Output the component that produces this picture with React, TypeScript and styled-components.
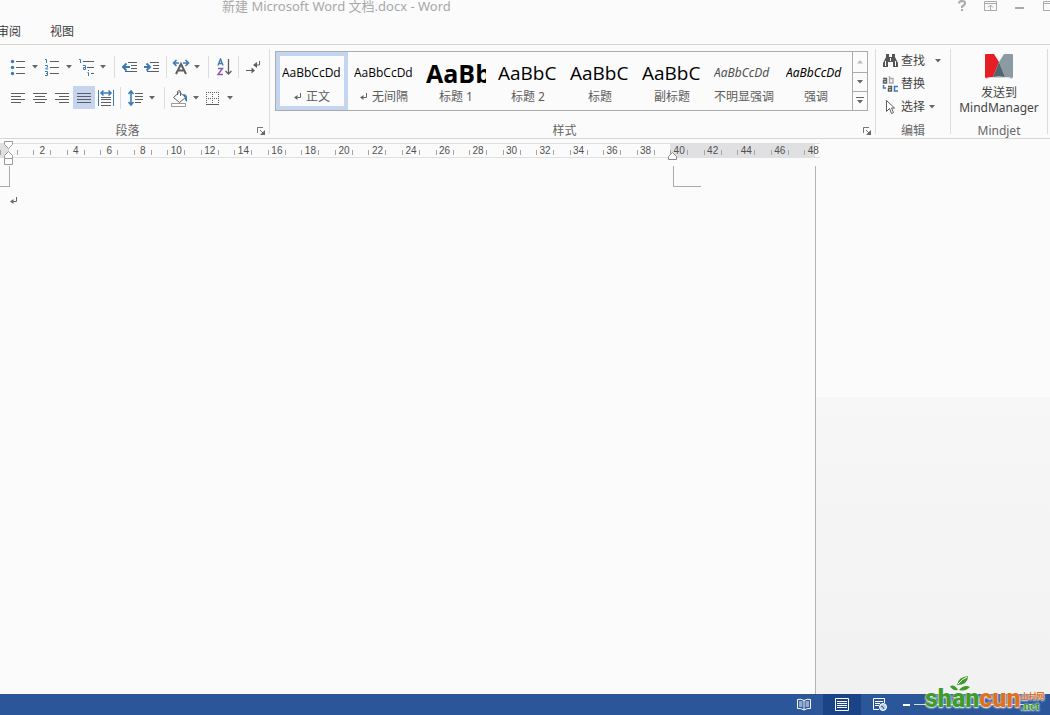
import React from "react";
import styled, { createGlobalStyle } from "styled-components";

const Global = createGlobalStyle`
  * { box-sizing: border-box; }
  body { margin: 0; background: #fbfbfb; color: #444; font: 12px/16px "Noto Sans", "Noto Sans CJK SC", sans-serif; }
  button { font: inherit; color: inherit; border: 0; padding: 0; margin: 0; background: none; cursor: pointer; }
  svg { display: block; flex: none; }
`;

const BLUE = "#3f7ab8";
const INK = "#5e5e5e";

const Window = styled.div`
  display: flex;
  flex-direction: column;
  min-height: 100vh;
  overflow: hidden;
  position: relative;
`;

const TitleBar = styled.header`
  display: flex;
  justify-content: space-between;
  height: 18px;
  padding-left: 222px;
  color: #a8a8a8;
`;
const Title = styled.h1`
  margin: 0;
  font-size: 13px;
  line-height: 12px;
  font-weight: 400;
  white-space: nowrap;
`;
const WindowButtons = styled.div`
  display: flex;
  gap: 9px;
  margin-right: -9px;
  height: 13px;
`;

const Tabs = styled.nav`
  display: flex;
  align-items: center;
  gap: 29px;
  height: 26px;
  padding-top: 2px;
  margin-left: -3px;
`;
const Tab = styled.button`
  color: #3c3c3c;
`;

const Ribbon = styled.section`
  display: flex;
  height: 95px;
  padding-left: 2px;
  border-top: 1px solid #d6d6d2;
  border-bottom: 1px solid #d6d6d2;
`;
const Group = styled.section<{ $width: number }>`
  display: flex;
  flex-direction: column;
  width: ${(p) => p.$width}px;
  margin: 4px 0;
  border-right: 1px solid #dcdcdc;
`;
const GroupBody = styled.div<{ $top?: number }>`
  flex: 1;
  padding-top: ${(p) => p.$top ?? 2}px;
`;
const GroupFoot = styled.footer<{ $launcher?: boolean }>`
  display: grid;
  grid-template-columns: 1fr ${(p) => (p.$launcher ? "16px" : "0")};
  align-items: center;
  justify-items: center;
  height: 11px;
  color: #666;
`;
const GroupName = styled.h2`
  margin: 0;
  font-size: 12px;
  line-height: 16px;
  font-weight: 400;
`;
const ToolRow = styled.div<{ $gap: number; $start: number }>`
  display: flex;
  align-items: center;
  height: 31px;
  padding-left: ${(p) => p.$start}px;
  --rule-gap: ${(p) => p.$gap}px;
`;
const Rule = styled.span`
  width: 1px;
  height: 22px;
  margin: 0 calc(var(--rule-gap) + 3px) 0 var(--rule-gap);
  background: #dcdcdc;
`;
const Tool = styled.button<{ $on?: boolean }>`
  display: flex;
  align-items: center;
  justify-content: center;
  width: 22px;
  height: 23px;
  background: ${(p) => (p.$on ? "#c5d5ef" : "transparent")};
`;
const SplitTool = styled.button`
  display: flex;
  align-items: center;
  gap: 4px;
  width: 34px;
  height: 23px;
`;

const Gallery = styled.div`
  display: flex;
  height: 60px;
  margin: 0 7px 0 5px;
  border: 1px solid #ababab;
`;
const StyleCell = styled.button<{ $on?: boolean }>`
  display: flex;
  flex-direction: column;
  align-items: center;
  width: 72px;
  padding: 2px 2px 0;
  border: 4px solid ${(p) => (p.$on ? "#c5d5ef" : "transparent")};
`;
const Sample = styled.span<{ $size: number; $bold?: boolean; $italic?: boolean; $color?: string }>`
  flex: none;
  width: 60px;
  height: 30px;
  overflow: hidden;
  text-align: left;
  white-space: nowrap;
  font-family: ${(p) => (p.$italic ? "Noto Sans" : "Open Sans")}, sans-serif;
  font-size: ${(p) => p.$size}px;
  line-height: 30px;
  font-weight: ${(p) => (p.$bold ? 700 : 400)};
  font-style: ${(p) => (p.$italic ? "italic" : "normal")};
  color: ${(p) => p.$color ?? "#000"};
`;
const StyleName = styled.span`
  display: flex;
  align-items: center;
  gap: 4px;
  margin-top: 1px;
  color: #5c5c5c;
  white-space: nowrap;
`;
const Scroller = styled.div`
  display: grid;
  grid-template-rows: 20px 19px 19px;
  flex: 1;
  border-left: 1px solid #ababab;
`;
const ScrollButton = styled.button`
  display: grid;
  place-items: center;
  & + & { border-top: 1px solid #ababab; }
`;

const EditList = styled.div`
  display: flex;
  flex-direction: column;
  padding-left: 6px;
`;
const EditButton = styled.button<{ $gap?: number }>`
  display: flex;
  align-items: center;
  height: 23px;
  white-space: nowrap;
  & > svg + span { margin: 0 ${(p) => p.$gap ?? 0}px 0 2px; }
`;
const SendButton = styled.button`
  display: flex;
  flex-direction: column;
  align-items: center;
  width: 100%;
  line-height: 15px;
  & > svg { margin-bottom: 4px; }
`;

const Ruler = styled.div`
  position: relative;
  height: 15px;
  margin-top: 4px;
`;
const RulerBand = styled.div`
  width: 820px;
  height: 15px;
  overflow: hidden;
  background: linear-gradient(to right, #e0e0e2 9px, transparent 9px 670px, #e0e0e2 670px 815px, transparent 815px);
  box-shadow: inset 0 1px #e0e0e0, inset 0 -1px #e0e0e0;
`;
const RulerScale = styled.div`
  display: grid;
  grid-template-columns: repeat(25, 1fr);
  width: 838px;
  margin-left: -8px;
`;
const RulerStep = styled.span`
  display: grid;
  grid-template-columns: 1px 16px 1px;
  justify-content: center;
  align-items: center;
  height: 15px;
  font: 10px/13px "Liberation Sans", sans-serif;
  color: #505050;
  &::before, &::after { content: ""; height: 5px; background: #a5a5a5; margin-top: 3px; }
`;
const RulerNumber = styled.span`
  display: flex;
  justify-content: center;
`;
const Marker = styled.span<{ $x: number; $y: number }>`
  position: absolute;
  left: ${(p) => p.$x}px;
  top: ${(p) => p.$y}px;
`;

const Workspace = styled.main`
  display: flex;
  flex: 1;
`;
const Page = styled.article`
  width: 816px;
  margin-top: 8px;
  border-right: 1px solid #b4b4b4;
  background: #fbfbfb;
`;
const MarginMarks = styled.div`
  display: flex;
  gap: 663px;
  height: 21px;
`;
const LeftMark = styled.span`
  width: 10px;
  border: solid #ababab;
  border-width: 0 1px 1px 0;
`;
const RightMark = styled.span`
  width: 28px;
  border: solid #ababab;
  border-width: 0 0 1px 1px;
`;
const Paragraph = styled.p`
  margin: 10px 0 0 10px;
`;
const Backdrop = styled.div`
  flex: 1;
  background: linear-gradient(to bottom, #fbfbfb 239px, #f7f7f7 239px, #f1f1f2 100%);
`;

const StatusBar = styled.footer`
  display: flex;
  justify-content: flex-end;
  height: 21px;
  background: #2b579a;
`;
const ViewButton = styled.button<{ $on?: boolean }>`
  display: grid;
  place-items: center;
  width: 38px;
  height: 21px;
  background: ${(p) => (p.$on ? "#1b4486" : "transparent")};
`;
const ZoomOut = styled.button`
  display: grid;
  place-items: center;
  width: 15px;
`;
const ZoomSlider = styled.input`
  appearance: none;
  width: 120px;
  height: 1px;
  margin: 10px 16px 0 0;
  background: #d5deeb;
  &::-webkit-slider-thumb { appearance: none; width: 4px; height: 1px; background: #fff; }
`;

const Watermark = styled.div`
  position: absolute;
  right: 2px;
  bottom: 4px;
  width: 123px;
  height: 35px;
  display: flex;
  align-items: flex-end;
  pointer-events: none;
  color: #3f9b2c;
  font: 900 25px/24px Roboto, sans-serif;
  text-shadow: 0 0 2px #fff, 0 1px 2px #fff;
`;
const Orange = styled.span`
  color: #e0701c;
`;
const WatermarkSide = styled.span`
  display: flex;
  flex-direction: column;
  font: 700 12px/10px "Liberation Serif", serif;
`;
const SideTop = styled.span`
  color: #e0701c;
  font: 700 8px/10px "Noto Sans CJK SC", sans-serif;
`;
const Leaf = styled.svg`
  position: absolute;
  left: 24px;
  top: 0;
`;

const Caret = () => (
  <svg width="6" height="4" viewBox="0 0 6 4"><path d="M0 0h6L3 3.4z" fill="#666" /></svg>
);

const Icon = ({ children, w = 18, h = 18 }: { children: React.ReactNode; w?: number; h?: number }) => (
  <svg width={w} height={h} viewBox={`0 0 ${w} ${h}`} fill="none" stroke={INK} aria-hidden="true">{children}</svg>
);

const Return = () => (
  <svg width="8" height="8" viewBox="0 0 8 8" fill="none" stroke="#666"><path d="M6.5 0v4.5H2" /><path d="M0 4.5 3.5 2v5z" fill="#666" stroke="none" /></svg>
);

const Launcher = () => (
  <button aria-label="More options">
    <svg width="8" height="8" viewBox="0 0 8 8" fill="none" stroke="#777"><path d="M.5 6V.5H6M3 3l3 3" /><path d="M8 3v5H3z" fill="#666" stroke="none" /></svg>
  </button>
);

const Bullets = () => (
  <Icon><path d="M6 3.5h9M6 9.5h9M6 15.5h9" /><g fill={BLUE} stroke="none"><circle cx="2.5" cy="3.5" r="1.7" /><circle cx="2.5" cy="9.5" r="1.7" /><circle cx="2.5" cy="15.5" r="1.7" /></g></Icon>
);
const Numbers = () => (
  <Icon><path d="M6 3.5h9M6 9.5h9M6 15.5h9" /><path stroke={BLUE} d="M1 1.5h1.5V5M1 7.5h2.5V9L1.5 11H4M1 13.5h2.5v4H1M2 15.5h1.500" /></Icon>
);
const Multilevel = () => (
  <Icon><path d="M5 3.5h11M9 9.5h7M13 15.5h3" /><path stroke={BLUE} d="M1 1.5h1.5V5M5 7.5h2.5v4H5.5v-2h2M10.5 12v1M9.5 14.5h1V18" /></Icon>
);
const Outdent = () => (
  <Icon><path d="M6 4.5h9M9 7.5h6M9 10.5h6M3 13.5h12" /><path stroke={BLUE} strokeWidth="2" d="M1 9h7M4.5 5.5 1 9l3.500 3.500" /></Icon>
);
const Indent = () => (
  <Icon><path d="M6 4.5h9M9 7.5h6M9 10.5h6M3 13.5h12" /><path stroke={BLUE} strokeWidth="2" d="M0 9h6M2.500 5.500 6 9l-3.500 3.500" /></Icon>
);
const AsianLayout = () => (
  <Icon><path strokeWidth="2" d="M4 16 9 6l5 10M6 12.5h6" /><path stroke={BLUE} strokeWidth="1.7" d="M7 5H1.500M4.500 2 1.500 5l3 3M11 5h5.500M13.500 2l3 3-3 3" /></Icon>
);
const Sort = () => (
  <Icon><path stroke={BLUE} strokeWidth="1.4" d="M2 7.500 4.500 1 7 7.500M3 5.500h3" /><path stroke="#8a55b0" strokeWidth="1.4" d="M2 10.500h4.500L2 16.500h5" /><path strokeWidth="1.3" d="M12.500 1v15M9.500 13l3 3 3-3" /></Icon>
);
const ShowMarks = () => (
  <Icon><path d="M13.500 3v4H9" /><path d="M7 7l4-3v6zM9 12.500 5.500 9.500v6z" fill={INK} stroke="none" /><path d="M0 12.500h6" /></Icon>
);
const Lines = ({ d }: { d: string }) => <Icon><path d={d} /></Icon>;
const Distribute = () => (
  <Icon><path d="M4 8.5h10M4 10.5h10M4 13.5h10M4 16.5h10" /><path stroke={BLUE} d="M1.5 1v16M16.5 1v16" /><path stroke={BLUE} strokeWidth="1.5" d="M4 4h10M6.500 1.500 4 4l2.500 2.500M11.500 1.500 14 4l-2.500 2.500" /></Icon>
);
const LineSpacing = () => (
  <Icon><path d="M8 4.5h8M8 7.500h8M8 10.500h8M8 13.500h6" /><path stroke={BLUE} strokeWidth="1.6" d="M4 2v14M1.500 5 4 2l2.500 3M1.500 13 4 16l2.500-3" /></Icon>
);
const Bucket = () => (
  <Icon><path d="M2.500 8.500 8.500 3l6 5.500-6 5zM6.500 6V2.500q1.500-2 3 0V7" fill="#fff" /><path d="M12 5q4 0 4 3.500V13l-2-2V8.500z" fill={BLUE} stroke="none" /><path stroke="#999" d="M.5 14.500h14v3H.5z" fill="#fff" /></Icon>
);
const Borders = () => (
  <Icon><path strokeDasharray="1 1" d="M1 3.5h13M1 9.5h13M1.500 3v12M7.500 3v12M13.500 3v12" /><path d="M1 15.500h13" /></Icon>
);

const styleItems = [
  { name: "正文", text: "AaBbCcDd", size: 12, mark: true, on: true },
  { name: "无间隔", text: "AaBbCcDd", size: 12, mark: true },
  { name: "标题 1", text: "AaBb", size: 25, bold: true },
  { name: "标题 2", text: "AaBbC", size: 19 },
  { name: "标题", text: "AaBbC", size: 19 },
  { name: "副标题", text: "AaBbC", size: 19 },
  { name: "不明显强调", text: "AaBbCcDd", size: 12, italic: true, color: "#505050" },
  { name: "强调", text: "AaBbCcDd", size: 12, italic: true },
];

export default function App() {
  return (
    <Window>
      <Global />
      <TitleBar>
        <Title>新建 Microsoft Word 文档.docx - Word</Title>
        <WindowButtons>
          <button aria-label="Help"><Icon w={20} h={13}><path stroke="#aaa" strokeWidth="2" d="M7 3.500q0-2.500 3-2.500t3 2.200q0 1.800-3 3.300V8M10 9v2" /></Icon></button>
          <button aria-label="Ribbon display"><Icon w={20} h={13}><path stroke="#aaa" d="M3.500 1.500h12v9h-12zM4 3.500h12M9.500 10V5M7 7.500 9.500 5 12 7.500" /></Icon></button>
          <button aria-label="Minimize"><Icon w={20} h={13}><path stroke="#aaa" strokeWidth="2" d="M5 8h9" /></Icon></button>
          <button aria-label="Restore"><Icon w={20} h={13}><path stroke="#aaa" d="M4.500 1.500h9v9h-9zM4 3.500h9" /></Icon></button>
        </WindowButtons>
      </TitleBar>
      <Tabs>
        <Tab>审阅</Tab>
        <Tab>视图</Tab>
      </Tabs>

      <Ribbon>
        <Group $width={268}>
          <GroupBody>
            <ToolRow $gap={2} $start={8}>
              <SplitTool aria-label="Bullets"><Bullets /><Caret /></SplitTool>
              <SplitTool aria-label="Numbering"><Numbers /><Caret /></SplitTool>
              <SplitTool aria-label="Multilevel list"><Multilevel /><Caret /></SplitTool>
              <Rule />
              <Tool aria-label="Decrease indent"><Outdent /></Tool>
              <Tool aria-label="Increase indent"><Indent /></Tool>
              <Rule />
              <SplitTool aria-label="Asian layout"><AsianLayout /><Caret /></SplitTool>
              <Rule />
              <Tool aria-label="Sort"><Sort /></Tool>
              <Rule />
              <Tool aria-label="Show marks"><ShowMarks /></Tool>
            </ToolRow>
            <ToolRow $gap={3} $start={5}>
              <Tool aria-label="Align left"><Lines d="M2 4.500h14M2 7.500h10M2 10.500h14M2 13.500h10" /></Tool>
              <Tool aria-label="Center"><Lines d="M2 4.500h14M4 7.500h10M2 10.500h14M4 13.500h10" /></Tool>
              <Tool aria-label="Align right"><Lines d="M2 4.500h14M6 7.500h10M2 10.500h14M6 13.500h10" /></Tool>
              <Tool $on aria-label="Justify"><Lines d="M2 4.500h14M2 7.500h14M2 10.500h14M2 13.500h14" /></Tool>
              <Tool aria-label="Distribute"><Distribute /></Tool>
              <Rule />
              <SplitTool aria-label="Line spacing"><LineSpacing /><Caret /></SplitTool>
              <Rule />
              <SplitTool aria-label="Shading"><Bucket /><Caret /></SplitTool>
              <SplitTool aria-label="Borders"><Borders /><Caret /></SplitTool>
            </ToolRow>
          </GroupBody>
          <GroupFoot $launcher><GroupName>段落</GroupName><Launcher /></GroupFoot>
        </Group>

        <Group $width={606}>
          <GroupBody>
            <Gallery>
              {styleItems.map((s) => (
                <StyleCell key={s.name} $on={s.on}>
                  <Sample $size={s.size} $bold={s.bold} $italic={s.italic} $color={s.color}>{s.text}</Sample>
                  <StyleName>{s.mark && <Return />}{s.name}</StyleName>
                </StyleCell>
              ))}
              <Scroller>
                <ScrollButton aria-label="Scroll up"><svg width="6" height="4"><path d="M0 3.500h6L3 0z" fill="#bbb" /></svg></ScrollButton>
                <ScrollButton aria-label="Scroll down"><Caret /></ScrollButton>
                <ScrollButton aria-label="More styles"><svg width="8" height="8"><path d="M0 0h8v1H0zM1 3h6L4 6.500z" fill="#666" /></svg></ScrollButton>
              </Scroller>
            </Gallery>
          </GroupBody>
          <GroupFoot $launcher><GroupName>样式</GroupName><Launcher /></GroupFoot>
        </Group>

        <Group $width={75}>
          <GroupBody $top={0}>
            <EditList>
              <EditButton $gap={10}>
                <Icon w={17} h={16}><path d="M4 1h3v3h3V1h3v3l3 6v4h-5V9H6v5H1v-4l3-6z" fill="#555" stroke="none" /><path stroke="#fff" d="M3.500 8v5M13.500 8v5M8.500 5v3" /></Icon>
                <span>查找</span><Caret />
              </EditButton>
              <EditButton>
                <Icon w={17} h={16}>
                  <path strokeWidth="1.4" d="M1 2.500h3.500V7H1.500V4.500h3" /><path stroke="#aaa" strokeWidth="1.4" d="M7.500 0v7H11V2.500H7.500" />
                  <path strokeWidth="1.4" d="M6 10.500h3.500V15h-3v-2.500h3" /><path stroke={BLUE} strokeWidth="1.5" d="M16 10.500h-3.500V15H16M1.500 9v3H4" />
                </Icon>
                <span>替换</span>
              </EditButton>
              <EditButton $gap={4}>
                <Icon w={17} h={16}><path d="M4.500 1.500v11l3-3 2 5 2-1-2-4.500h3z" fill="#fff" /></Icon>
                <span>选择</span><Caret />
              </EditButton>
            </EditList>
          </GroupBody>
          <GroupFoot><GroupName>编辑</GroupName></GroupFoot>
        </Group>

        <Group $width={97}>
          <GroupBody>
            <SendButton>
              <svg width="30" height="30" viewBox="0 0 30 30">
                <path d="M2 28q13-4 26 0V27H2z" fill="#ccc" />
                <path d="M1 4q0-1 1-1h8l5 8-6 15q-4 0-7 1-1 0-1-1z" fill="#e51d25" />
                <path d="M29 4q0-1-1-1h-8l-5 8 6 15q4 0 7 1 1 0 1-1z" fill="#8c9aa3" />
                <path d="m15 11 6 15q-6-1-12 0z" fill="#52646e" />
              </svg>
              <span>发送到</span>
              <span>MindManager</span>
            </SendButton>
          </GroupBody>
          <GroupFoot><GroupName>Mindjet</GroupName></GroupFoot>
        </Group>
      </Ribbon>

      <Ruler>
        <RulerBand>
          <RulerScale>
            {Array.from({ length: 25 }, (_, i) => (
              <RulerStep key={i}><RulerNumber>{i ? i * 2 : ""}</RulerNumber></RulerStep>
            ))}
          </RulerScale>
        </RulerBand>
        <Marker $x={4} $y={-2}>
          <svg width="9" height="25" fill="#fff" stroke="#999"><path d="M.5.500h8v3l-4 4-4-4zM.5 17.500v-3l4-4 4 4v3zM.5 17.500h8v6h-8z" /></svg>
        </Marker>
        <Marker $x={668} $y={9}>
          <svg width="9" height="8" fill="#fff" stroke="#888"><path d="M.5 7.500v-3l4-4 4 4v3z" /></svg>
        </Marker>
      </Ruler>

      <Workspace>
        <Page>
          <MarginMarks><LeftMark /><RightMark /></MarginMarks>
          <Paragraph><Return /></Paragraph>
        </Page>
        <Backdrop />
      </Workspace>

      <StatusBar>
        <ViewButton aria-label="Read mode"><Icon w={14} h={13}><path stroke="#fff" d="M7 2.500Q4 .5.500 1.500v9Q4 10 7 12q3-2 6.500-1.500v-9Q10 .5 7 2.500V12M2 4h3.500M2 6h3.500M2 8h3.500M8.500 4H12M8.500 6H12M8.500 8H12" /></Icon></ViewButton>
        <ViewButton $on aria-label="Print layout"><Icon w={14} h={13}><path stroke="#fff" d="M.5.500h13v12H.5zM2 3.500h10M2 5.500h10M2 7.500h10M2 9.500h10" /></Icon></ViewButton>
        <ViewButton aria-label="Web layout"><Icon w={14} h={13}><path stroke="#fff" d="M6 11.500H.5V.500h11V5M2 3.500h8M2 5.500h5M2 7.500h4" /><circle cx="10" cy="9" r="3.500" fill="#b9cbe6" stroke="#fff" /><path stroke="#2b579a" d="M8 8l2 1 1 2" /></Icon></ViewButton>
        <ZoomOut aria-label="Zoom out"><svg width="7" height="2"><path d="M0 0h7v2H0z" fill="#fff" /></svg></ZoomOut>
        <ZoomSlider type="range" aria-label="Zoom" />
      </StatusBar>

      <Watermark>
        <span>shan</span><Orange>cun</Orange>
        <WatermarkSide><SideTop>山村网</SideTop><span>.net</span></WatermarkSide>
        <Leaf width="22" height="17" viewBox="0 0 22 17"><path d="M8 9Q9 1 19 0q0 9-11 9zM10 14q5-6 11-3-5 5-11 3zM1 10q5-2 8 4-6 1-8-4z" fill="#3f9b2c" /><path d="M9 8Q13 3 18 1" fill="none" stroke="#fff" /></Leaf>
      </Watermark>
    </Window>
  );
}
